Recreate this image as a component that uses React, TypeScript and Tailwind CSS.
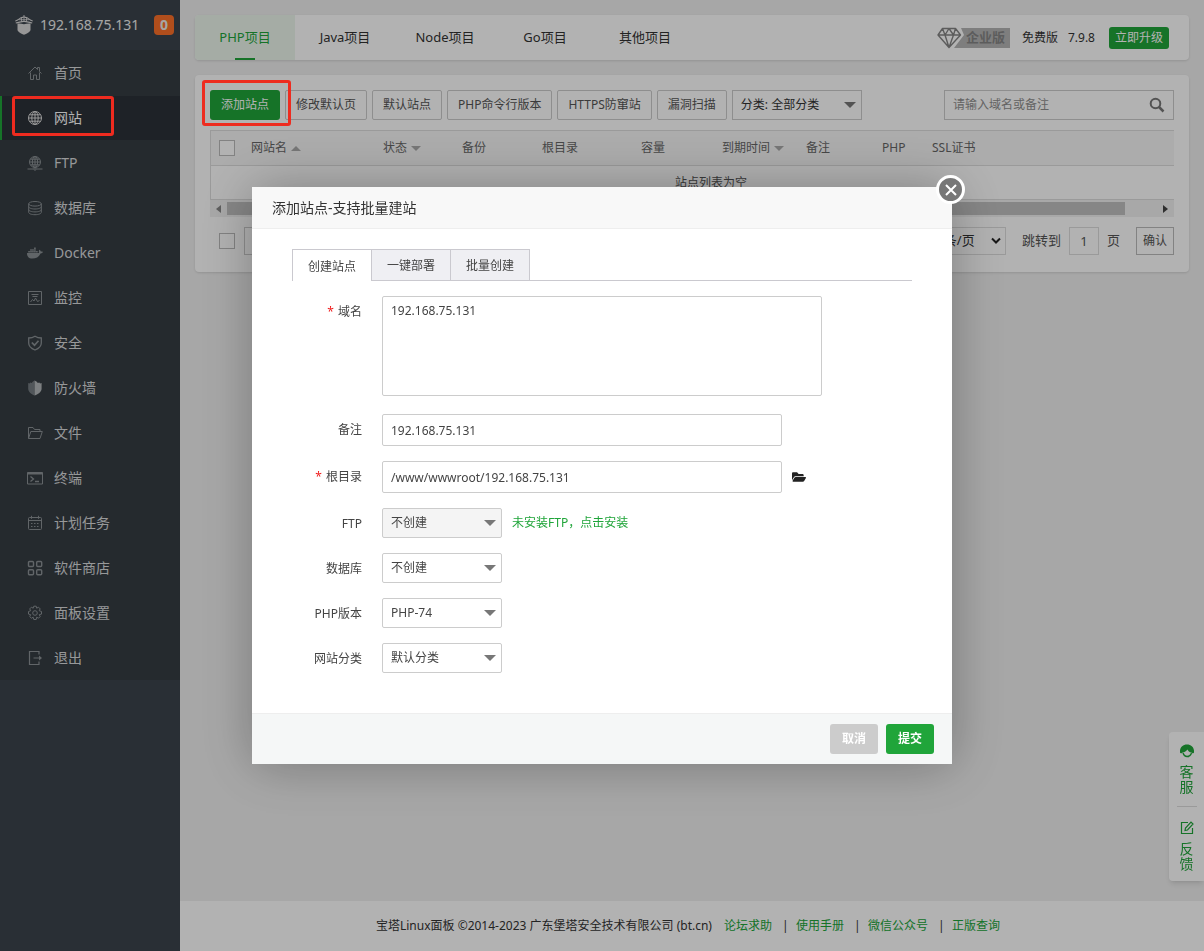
import React from 'react';
import { FaFolderOpen, FaDocker } from 'react-icons/fa';

interface MenuItem {
  key: string;
  label: string;
  icon: React.ReactNode;
}

interface Column {
  title: string;
  width: string;
  sort?: 'up' | 'down';
}

const Icon: React.FC<{ children: React.ReactNode }> = ({ children }) => (
  <svg width="16" height="16" viewBox="0 0 16 16" fill="none" stroke="currentColor" strokeWidth="1" aria-hidden="true">
    {children}
  </svg>
);

const menu: MenuItem[] = [
  {
    key: 'home',
    label: '首页',
    icon: <Icon><path d="M1.5 8.5 8 2l2.5 2.5V2.5h2v4l2 2M3.5 7.5v7h3v-4.5h3v4.5h3v-7" /></Icon>
  },
  {
    key: 'site',
    label: '网站',
    icon: <Icon><circle cx="8" cy="8" r="6.5" /><ellipse cx="8" cy="8" rx="3.2" ry="6.5" /><path d="M8 1.5v13M1.5 8h13M2.5 4.8h11M2.5 11.2h11" /></Icon>
  },
  {
    key: 'ftp',
    label: 'FTP',
    icon: <Icon><circle cx="8" cy="7" r="5.5" /><ellipse cx="8" cy="7" rx="2.6" ry="5.5" /><path d="M8 1.5v11M2.5 7h11M3.5 4.2h9M3.5 9.8h9M.5 14h6M9.5 14h6" /><circle cx="8" cy="14" r="1.2" /></Icon>
  },
  {
    key: 'database',
    label: '数据库',
    icon: <Icon><ellipse cx="8" cy="3.8" rx="6.3" ry="2.3" /><path d="M1.7 3.8v8.6c0 1.3 2.8 2.3 6.3 2.3s6.3-1 6.3-2.3V3.8M1.7 6.7C1.7 8 4.5 9 8 9s6.3-1 6.3-2.3M1.7 9.6c0 1.3 2.8 2.3 6.3 2.3s6.3-1 6.3-2.3" /></Icon>
  },
  { key: 'docker', label: 'Docker', icon: <FaDocker className="w-4 h-4" /> },
  {
    key: 'monitor',
    label: '监控',
    icon: <Icon><path d="M1.5 1.5h13v13h-13zM4.500 4.500h7M5.500 6.500h5M3.500 12l2-2.500 1.500 1.500 1.500-3 2 3.500 2-1" /></Icon>
  },
  {
    key: 'security',
    label: '安全',
    icon: <Icon><g strokeWidth="1.300"><path d="M8 1.2c2 1.300 4 1.800 6.300 1.800v5c0 3.500-3 5.700-6.300 7C4.700 13.700 1.700 11.500 1.700 8V3C4 3 6 2.500 8 1.200z" /><path d="m4.800 7.500 2.700 2.700 4-4.400" strokeWidth="1.700" /></g></Icon>
  },
  {
    key: 'firewall',
    label: '防火墙',
    icon: (
      <Icon>
        <path d="M7.600.5v15C4 13.900 1.200 12 1.200 8.500V3l1.300.5.8-1 1.400.6 1-1.300z" fill="currentColor" stroke="none" opacity=".75" />
        <path d="M7.600.5v15c4-1.600 7-3.500 7-7V3l-1.500.5-.8-1-1.500.6-1-1.300z" fill="#b4b8ba" stroke="none" />
      </Icon>
    )
  },
  {
    key: 'files',
    label: '文件',
    icon: <Icon><path d="M1.500 13.500v-11h4.500l1.500 2h5.500v2M1.500 13.500l2.300-7h11.500l-2.300 7z" /></Icon>
  },
  {
    key: 'terminal',
    label: '终端',
    icon: <Icon><path d="M.5 2.500h15v11.500H.5z" /><path d="M.5 3.500h15" strokeWidth="2" /><path d="m3.500 6.500 3 2.500-3 2.500M8 11.500h4" strokeWidth="1.300" /></Icon>
  },
  {
    key: 'crontab',
    label: '计划任务',
    icon: <Icon><rect x="1.500" y="2.500" width="13" height="12" rx="1" /><path d="M4.500.8v3M11.500.8v3M2 5.500h12" /><path d="M4 8.500h8M4 11.500h8" strokeDasharray="1.500 1.500" /></Icon>
  },
  {
    key: 'soft',
    label: '软件商店',
    icon: <Icon><g strokeWidth="1.400"><rect x="1.500" y="1.500" width="5" height="5" rx="1" /><rect x="9.700" y="1.500" width="5" height="5" rx="1" /><rect x="1.500" y="9.700" width="5" height="5" rx="1" /><rect x="9.700" y="9.700" width="5" height="5" rx="1" /></g></Icon>
  },
  {
    key: 'config',
    label: '面板设置',
    icon: <Icon><circle cx="8" cy="8" r="2.300" /><path d="M6.800 1.200h2.400l.5 2 1.800-1 1.700 1.700-1 1.800 2.300.8v2.600l-2.300.6 1 1.800-1.700 1.700-1.800-1-.5 2.300H6.800l-.6-2.300-1.800 1-1.700-1.700 1-1.800-2.200-.6V6.500l2.200-.8-1-1.800 1.700-1.700 1.800 1z" /></Icon>
  },
  {
    key: 'logout',
    label: '退出',
    icon: <Icon><path d="M12 4.500v-3H2.500v13H12v-3M6.500 8H14" strokeWidth="1.200" /><path d="M12 5.500 15 8l-3 2.500z" fill="currentColor" stroke="none" /></Icon>
  }
];

const projectTabs = ['PHP项目', 'Java项目', 'Node项目', 'Go项目', '其他项目'];

const toolButtons = ['修改默认页', '默认站点', 'PHP命令行版本', 'HTTPS防窜站', '漏洞扫描'];

const columns: Column[] = [
  { title: '网站名', width: 'w-[132px]', sort: 'up' },
  { title: '状态', width: 'w-[79px]', sort: 'down' },
  { title: '备份', width: 'w-[80px]' },
  { title: '根目录', width: 'w-[99px]' },
  { title: '容量', width: 'w-[81px]' },
  { title: '到期时间', width: 'w-[84px]', sort: 'down' },
  { title: '备注', width: 'w-[76px]' },
  { title: 'PHP', width: 'w-[50px]' },
  { title: 'SSL证书', width: '' }
];

const footerLinks = ['论坛求助', '使用手册', '微信公众号', '正版查询'];

const Caret: React.FC<{ className?: string; up?: boolean }> = ({ className = '', up }) => (
  <svg className={className} width="12" height="6" viewBox="0 0 12 6" aria-hidden="true">
    <path d={up ? 'M0 6h12L6 0z' : 'M0 0h12L6 6z'} fill="currentColor" />
  </svg>
);

const CheckBox: React.FC<{ label: string }> = ({ label }) => (
  <input type="checkbox" aria-label={label} className="block w-4 h-4 appearance-none border border-[#bbb] bg-white" />
);

const Sidebar: React.FC = () => (
  <aside className="w-[180px] shrink-0 bg-[#3c444d]">
    <div className="flex h-[50px] items-center pl-[15px] pr-1.5">
      <svg width="18" height="20" viewBox="0 0 18 20" fill="none" stroke="#d8d8d8" aria-hidden="true">
        <path d="M2.500 8.500c2-.3 4.500 0 6.500.8 2-.8 4.500-1.100 6.500-.8v6.800c-1 2-4 3.500-6.500 4.500-2.500-1-5.500-2.500-6.500-4.500z" fill="#d8d8d8" stroke="none" />
        <path d="M.3 6C3 5.500 4.500 3.500 6 2.800c2-.8 4-.8 6 0 1.500.7 3 2.700 5.700 3.200M.8 8C4 7.500 6.500 6.300 9 6.300s5 1.200 8.200 1.700M9 .3v2.500" strokeWidth="1.200" />
        <path d="M4 4.700h10M6.500 3v4M9 3v4M11.500 3v4" strokeWidth=".8" />
      </svg>
      <span className="ml-[7px] flex-1 text-sm text-[#eee]">192.168.75.131</span>
      <span className="flex h-5 w-5 items-center justify-center rounded bg-[#fc7029] text-sm font-bold text-[#eee]">0</span>
    </div>
    <nav>
      <ul className="bg-[#363d43]">
        {menu.map((item) => {
          const active = item.key === 'site';
          return (
            <li key={item.key} className="relative pt-px">
              <a
                href="#"
                className={`flex h-11 items-center gap-[11px] border-l-2 pl-[25px] text-sm ${
                  active ? 'border-[#20a53a] bg-[#2c3138] text-white' : 'border-transparent text-[#d8dadc]'
                }`}
              >
                <span className={active ? 'text-[#ddd]' : 'text-[#8b9195]'}>{item.icon}</span>
                {item.label}
              </a>
              {active && <span className="pointer-events-none absolute left-3 top-px z-20 h-10 w-[102px] rounded-[3px] border-3 border-[#ee2b1f]" />}
            </li>
          );
        })}
      </ul>
    </nav>
  </aside>
);

const TopTabs: React.FC = () => (
  <div className="flex items-center justify-between rounded bg-white pr-5 shadow-sm">
    <div className="flex" role="tablist">
      {projectTabs.map((tab, i) => (
        <button
          key={tab}
          role="tab"
          aria-selected={i === 0}
          className={`relative h-[45px] w-[100px] text-[13px] ${i === 0 ? 'rounded-l bg-[#ecf6ed] text-[#20a53a]' : 'text-[#333]'}`}
        >
          {tab}
          {i === 0 && <span className="absolute bottom-0 left-10 h-0.5 w-5 bg-[#20a53a]" />}
        </button>
      ))}
    </div>
    <div className="flex items-center text-xs text-[#333]">
      <span className="relative flex h-[22px] w-[73px] items-center justify-end pr-[5px] text-[13px] font-bold text-[#858585]">
        <svg className="absolute left-0 top-0" width="73" height="22" viewBox="0 0 73 22" fill="none" aria-hidden="true">
          <path d="M24 1h49v20H17l10-13z" fill="#b5b5b5" />
          <path d="M5.500 1.500h13l5 6.500L12 20.500 1 8zM1 8h22.500M8 8l4 12.500L16.500 8M5.500 1.500 8 8l4-6.500L16.500 8l2-6.500" stroke="#858585" strokeWidth="1.400" strokeLinejoin="round" />
        </svg>
        <span className="relative">企业版</span>
      </span>
      <span className="ml-3">免费版</span>
      <span className="ml-2.5">7.9.8</span>
      <button className="ml-3.5 h-[22px] rounded-[3px] bg-[#20a53a] px-1.5 text-white">立即升级</button>
    </div>
  </div>
);

const SiteTable: React.FC = () => (
  <section className="mt-[15px] rounded bg-white p-[15px] pb-[17px] text-xs text-[#555] shadow-sm">
    <div className="flex items-center justify-between">
      <div className="flex gap-[5px]">
        <span className="relative">
          <button className="h-[30px] w-[70px] rounded-[3px] bg-[#20a53a] text-white">添加站点</button>
          <span className="pointer-events-none absolute -left-2 -right-[11px] -top-2.5 -bottom-1.5 z-20 rounded-[3px] border-3 border-[#ee2b1f]" />
        </span>
        {toolButtons.map((label) => (
          <button key={label} className="h-[30px] rounded-[2px] border border-[#ccc] px-2.5 text-[#555]">
            {label}
          </button>
        ))}
        <span className="relative">
          <select aria-label="分类" className="h-[30px] w-[130px] appearance-none border border-[#ccc] bg-white pl-2 text-[#333]">
            <option>分类: 全部分类</option>
          </select>
          <Caret className="pointer-events-none absolute right-1.5 top-3 text-[#777]" />
        </span>
      </div>
      <div className="flex h-[30px] w-[230px] items-center border border-[#ccc] px-2">
        <input aria-label="搜索" placeholder="请输入域名或备注" className="min-w-0 flex-1 outline-none placeholder:text-[#8f8f8f]" />
        <svg width="16" height="16" viewBox="0 0 16 16" fill="none" stroke="#777" aria-hidden="true">
          <circle cx="6.500" cy="6.500" r="4.800" strokeWidth="2" />
          <path d="m10 10 4.500 4.500" strokeWidth="2.500" />
        </svg>
      </div>
    </div>

    <div className="mt-2.5 overflow-hidden border-l border-[#ddd]">
      <table className="w-full min-w-[1000px] table-fixed border-collapse">
        <thead>
          <tr className="h-[35px] border-y border-[#ddd] bg-[#f6f6f6] text-[#666]">
            <th className="w-8 pl-2"><CheckBox label="全选" /></th>
            {columns.map((col) => (
              <th key={col.title} className={`whitespace-nowrap px-2 text-left font-normal ${col.width}`}>
                {col.title}
                {col.sort && <Caret up={col.sort === 'up'} className="ml-1 inline h-[5px] w-2.5 text-[#aaa]" />}
              </th>
            ))}
          </tr>
        </thead>
        <tbody>
          <tr className="h-[34px] border-b border-[#ddd]">
            <td colSpan={10} className="text-center">站点列表为空</td>
          </tr>
        </tbody>
      </table>
    </div>
    <div className="flex h-[17px] items-center bg-[#f1f1f1] px-1.5">
      <svg width="5" height="8" viewBox="0 0 5 8" aria-hidden="true"><path d="M5 0v8L0 4z" fill="#888" /></svg>
      <div className="mx-1.5 h-[13px] flex-1">
        <div className="mr-8 h-full bg-[#c1c1c1]" />
      </div>
      <svg width="5" height="8" viewBox="0 0 5 8" aria-hidden="true"><path d="M0 0v8l5-4z" fill="#444" /></svg>
    </div>

    <div className="mt-2.5 flex items-center justify-between">
      <div className="flex items-center gap-[9px] pl-[9px]">
        <CheckBox label="选择全部站点" />
        <select aria-label="批量操作" className="h-7 w-[130px] appearance-none border border-[#ccc] pl-2">
          <option>请选择批量操作</option>
        </select>
      </div>
      <div className="flex items-center text-[13px]">
        <span className="relative">
          <select aria-label="每页条数" className="h-7 w-[90px] appearance-none border border-[#ddd] bg-white pl-3 text-[#333]">
            <option>20条/页</option>
          </select>
          <svg className="pointer-events-none absolute right-1 top-2.5" width="12" height="8" viewBox="0 0 12 8" fill="none" stroke="#222" strokeWidth="2" aria-hidden="true">
            <path d="m2 1.500 4 4 4-4" />
          </svg>
        </span>
        <label htmlFor="page" className="ml-4">跳转到</label>
        <input id="page" defaultValue="1" className="mx-2 h-7 w-[30px] border border-[#ddd] text-center" />
        <span>页</span>
        <button className="ml-4 h-7 w-[38px] border border-[#bbb] text-xs">确认</button>
      </div>
    </div>
  </section>
);

const Footer: React.FC = () => (
  <footer className="flex h-[50px] items-center justify-center bg-white pr-2 text-xs text-[#333]">
    <span className="mr-3">宝塔Linux面板 ©2014-2023 广东堡塔安全技术有限公司 (bt.cn)</span>
    {footerLinks.map((link, i) => (
      <React.Fragment key={link}>
        {i > 0 && <span className="mx-2.5 w-1">|</span>}
        <a href="#" className="text-[#20a53a]">{link}</a>
      </React.Fragment>
    ))}
  </footer>
);

const SideWidget: React.FC = () => (
  <div className="fixed bottom-[70px] right-0 flex w-[35px] flex-col items-center rounded-l bg-white text-sm leading-[15px] text-[#20a53a] shadow-md">
    <a href="#" className="flex w-5 flex-col items-center gap-1.5 border-b border-[#ddd] pb-3 pt-3">
      <svg width="14" height="14" viewBox="0 0 14 14" aria-hidden="true">
        <path d="M0 8.500V6.500C.5 3 3 .5 7 .5s6.500 2.500 7 6v2c0 1-2.500 1-2.500 0C9.500 8.500 8 7 7.500 5.500 6.500 7 4.500 8.500 2.500 8.500c0 1-2.500 1-2.500 0z" fill="#20a53a" />
        <path d="M3 9c1 3 2.500 3.500 4 3.500S10.500 12 11.500 9M7 12.500h2" stroke="#20a53a" strokeWidth="1.300" fill="none" />
      </svg>
      <span className="w-3.5">客服</span>
    </a>
    <a href="#" className="flex w-5 flex-col items-center gap-1.5 pb-2.5 pt-3.5">
      <svg width="14" height="14" viewBox="0 0 14 14" fill="none" stroke="#20a53a" strokeWidth="1.200" aria-hidden="true">
        <path d="M8 1.500H1.500v11h11V7M5 9.500l.5-2.500L11 1l2 2-5.500 6z" />
      </svg>
      <span className="w-3.5">反馈</span>
    </a>
  </div>
);

const FormRow: React.FC<{ label: string; id: string; required?: boolean; children: React.ReactNode }> = ({ label, id, required, children }) => (
  <div className="flex">
    <label htmlFor={id} className="mr-5 w-[70px] shrink-0 text-right leading-8">
      {required && <span className="mr-1 text-[#f02020]">*</span>}
      {label}
    </label>
    {children}
  </div>
);

const FormSelect: React.FC<{ id: string; value: string; disabled?: boolean }> = ({ id, value, disabled }) => (
  <span className="relative">
    <select
      id={id}
      disabled={disabled}
      className="h-[30px] w-[120px] appearance-none rounded-[2px] border border-[#ccc] bg-white pl-2 text-[#444] disabled:bg-[#f4f4f4] disabled:opacity-100"
    >
      <option>{value}</option>
    </select>
    <Caret className="pointer-events-none absolute right-1.5 top-3 text-[#777]" />
  </span>
);

const AddSiteDialog: React.FC = () => (
  <div role="dialog" aria-labelledby="dialog-title" className="relative w-[700px] bg-white text-xs text-[#444] shadow-[1px_1px_50px_rgba(0,0,0,0.3)]">
    <h2 id="dialog-title" className="h-[42px] border-b border-[#eee] bg-[#f8f8f8] pl-5 text-sm leading-[42px] text-[#333]">
      添加站点-支持批量建站
    </h2>
    <button aria-label="关闭" className="absolute -right-[13px] -top-3 flex h-[29px] w-[29px] items-center justify-center rounded-full border-3 border-white bg-[#777]">
      <svg width="12" height="12" viewBox="0 0 12 12" stroke="#fff" strokeWidth="2" aria-hidden="true">
        <path d="m1 1 10 10M11 1 1 11" />
      </svg>
    </button>

    <div className="px-10 pb-[38px] pt-5">
      <div className="flex border-b border-[#cac9cf]" role="tablist">
        <button role="tab" aria-selected="true" className="-mb-px h-8 w-20 border-x border-t border-[#cac9cf] bg-white pt-0.5">创建站点</button>
        <button role="tab" aria-selected="false" className="h-[31px] w-[79px] border-r border-t border-[#cac9cf] bg-[#efeff3] pt-0.5">一键部署</button>
        <button role="tab" aria-selected="false" className="h-[31px] w-[79px] border-r border-t border-[#cac9cf] bg-[#efeff3] pt-0.5">批量创建</button>
      </div>

      <form className="mt-[15px] flex flex-col gap-[15px]">
        <FormRow label="域名" id="domain" required>
          <textarea
            id="domain"
            defaultValue="192.168.75.131"
            className="mb-[3px] h-[100px] w-[440px] resize-none rounded-[2px] border border-[#ccc] px-2 py-1 leading-5 text-[#444]"
          />
        </FormRow>
        <FormRow label="备注" id="remark">
          <input id="remark" defaultValue="192.168.75.131" className="h-8 w-[400px] rounded-[2px] border border-[#ccc] px-2" />
        </FormRow>
        <FormRow label="根目录" id="path" required>
          <input id="path" defaultValue="/www/wwwroot/192.168.75.131" className="h-8 w-[400px] rounded-[2px] border border-[#ccc] px-2" />
          <button type="button" aria-label="选择目录" className="ml-2.5 text-[#222]">
            <FaFolderOpen className="h-3.5 w-3.5" />
          </button>
        </FormRow>
        <div className="flex flex-col gap-[13px]">
          <FormRow label="FTP" id="ftp">
            <FormSelect id="ftp" value="不创建" disabled />
            <a href="#" className="ml-2.5 leading-[30px] text-[#20a53a]">未安装FTP，点击安装</a>
          </FormRow>
          <FormRow label="数据库" id="db">
            <FormSelect id="db" value="不创建" />
          </FormRow>
          <FormRow label="PHP版本" id="php">
            <FormSelect id="php" value="PHP-74" />
          </FormRow>
          <FormRow label="网站分类" id="type">
            <FormSelect id="type" value="默认分类" />
          </FormRow>
        </div>
      </form>
    </div>

    <div className="flex justify-end gap-2 border-t border-[#eee] bg-[#f5f7f7] py-2.5 pr-[18px] font-bold text-white">
      <button className="h-[30px] w-12 rounded-[3px] bg-[#ccc]">取消</button>
      <button className="h-[30px] w-12 rounded-[3px] bg-[#20a53a]">提交</button>
    </div>
  </div>
);

const App: React.FC = () => {
  return (
    <div className="flex min-h-screen bg-[#f0f0f0] font-['Noto_Sans','Noto_Sans_CJK_SC',sans-serif]">
      <Sidebar />
      <div className="flex min-w-0 flex-1 flex-col">
        <main className="flex-1 p-[15px]">
          <TopTabs />
          <SiteTable />
        </main>
        <Footer />
      </div>
      <SideWidget />

      <div className="fixed inset-0 z-10 flex items-center justify-center bg-black/30">
        <AddSiteDialog />
      </div>
    </div>
  );
};

export default App;
